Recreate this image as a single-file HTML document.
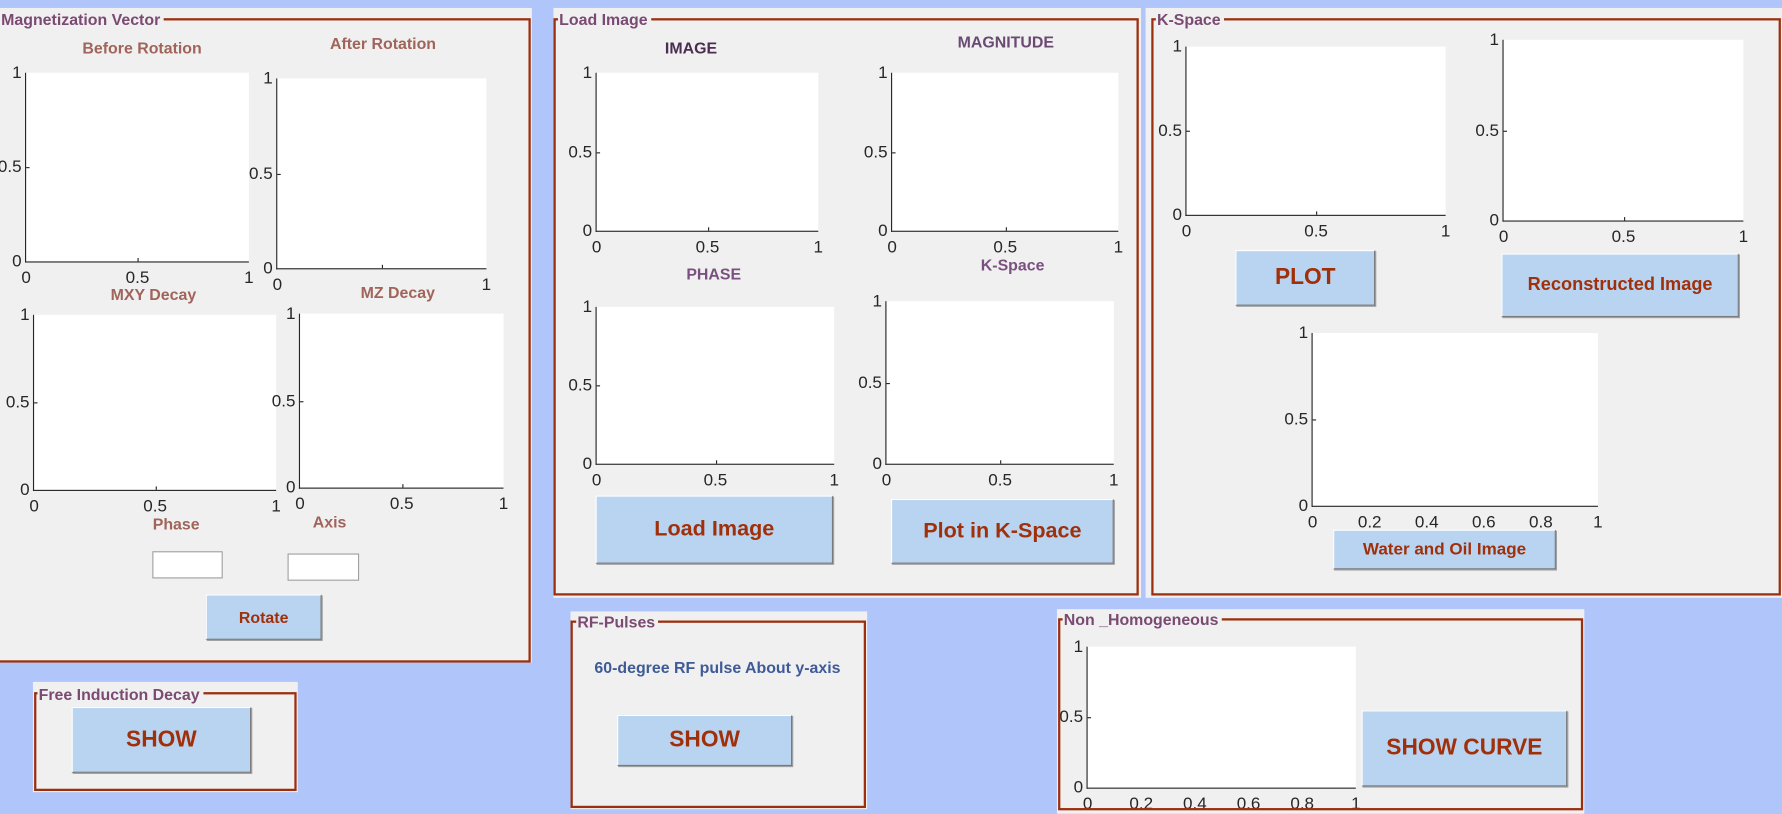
<!DOCTYPE html>
<html><head><meta charset="utf-8"><style>
*{box-sizing:border-box;margin:0;padding:0}
html,body{width:1782px;height:814px;overflow:hidden;background:#b0c6fb}
#w{position:absolute;left:0;top:0;width:1568px;height:716px;transform:scale(1.1365);transform-origin:0 0;font-family:"Liberation Sans",Arial,sans-serif}
.g{position:absolute;background:#f0f0f0;overflow:hidden}
.b{position:absolute;border:2px solid #9c2f0e}
.t{position:absolute;font-weight:bold;font-size:14px;color:#7a4a72;background:#f0f0f0;padding:0 3px 0 1px;line-height:14px;white-space:nowrap}
.ax{position:absolute;background:#fff;border-left:1px solid #262626;border-bottom:1px solid #262626}
.ax span{position:absolute;font-size:15px;color:#262626;line-height:15px;white-space:nowrap}
.ax .y{right:calc(100% + 4px);transform:translateY(-50%)}
.ax .x{top:calc(100% + 7px);transform:translateX(-50%)}
.ax i{position:absolute;background:#262626}
.ht{position:absolute;font-weight:bold;font-size:14px;color:#a0645a;white-space:nowrap;transform:translateX(-50%);background:#f0f0f0;line-height:16px}
.btn{position:absolute;background:#b9d4f1;border:1px solid #fff;border-right-color:#7a7a7a;border-bottom-color:#7a7a7a;box-shadow:1px 1px 0 #a0a0a0;color:#a0300a;font-weight:bold;display:flex;align-items:center;justify-content:center;white-space:nowrap}
.in{position:absolute;background:#fff;border:1px solid #a0a0a0}
</style></head><body><div id="w">

<div class="g" style="left:0;top:7px;width:468px;height:576px"></div>
<div class="b" style="left:-2px;top:16px;width:469px;height:567px"></div>
<div class="t" style="left:0;top:10px">Magnetization Vector</div>

<div class="ax" style="left:22px;top:64px;width:197px;height:167px"><i style="left:0;top:50%;width:3px;height:1px"></i><i style="left:50%;bottom:0;width:1px;height:3px"></i>
<span class="y" style="top:0">1</span><span class="y" style="top:50%">0.5</span><span class="y" style="top:100%">0</span>
<span class="x" style="left:0">0</span><span class="x" style="left:50%">0.5</span><span class="x" style="left:100%">1</span></div>
<div class="ht" style="left:125px;top:34px">Before Rotation</div>

<div class="ax" style="left:243px;top:69px;width:185px;height:168px"><i style="left:0;top:50%;width:3px;height:1px"></i><i style="left:50%;bottom:0;width:1px;height:3px"></i>
<span class="y" style="top:0">1</span><span class="y" style="top:50%">0.5</span><span class="y" style="top:100%">0</span>
<span class="x" style="left:0">0</span><span class="x" style="left:100%">1</span></div>
<div class="ht" style="left:337px;top:30px">After Rotation</div>

<div class="ax" style="left:29px;top:277px;width:214px;height:155px"><i style="left:0;top:50%;width:3px;height:1px"></i><i style="left:50%;bottom:0;width:1px;height:3px"></i>
<span class="y" style="top:0">1</span><span class="y" style="top:50%">0.5</span><span class="y" style="top:100%">0</span>
<span class="x" style="left:0">0</span><span class="x" style="left:50%">0.5</span><span class="x" style="left:100%">1</span></div>
<div class="ht" style="left:135px;top:251px">MXY Decay</div>

<div class="ax" style="left:263px;top:276px;width:180px;height:154px"><i style="left:0;top:50%;width:3px;height:1px"></i><i style="left:50%;bottom:0;width:1px;height:3px"></i>
<span class="y" style="top:0">1</span><span class="y" style="top:50%">0.5</span><span class="y" style="top:100%">0</span>
<span class="x" style="left:0">0</span><span class="x" style="left:50%">0.5</span><span class="x" style="left:100%">1</span></div>
<div class="ht" style="left:350px;top:249px">MZ Decay</div>

<div class="ht" style="left:155px;top:453px">Phase</div>
<div class="ht" style="left:290px;top:451px">Axis</div>
<div class="in" style="left:134px;top:485px;width:62px;height:24px"></div>
<div class="in" style="left:253px;top:487px;width:63px;height:24px"></div>
<div class="btn" style="left:181px;top:523px;width:102px;height:40px;font-size:14px">Rotate</div>

<div class="g" style="left:29px;top:600px;width:233px;height:97px"></div>
<div class="b" style="left:30px;top:609px;width:231px;height:87px"></div>
<div class="t" style="left:33px;top:604px">Free Induction Decay</div>
<div class="btn" style="left:63px;top:622px;width:158px;height:58px;font-size:20px">SHOW</div>

<div class="g" style="left:487px;top:7px;width:517px;height:519px"></div>
<div class="b" style="left:487px;top:16px;width:515px;height:508px"></div>
<div class="t" style="left:491px;top:10px">Load Image</div>

<div class="ax" style="left:524px;top:64px;width:196px;height:140px"><i style="left:0;top:50%;width:3px;height:1px"></i><i style="left:50%;bottom:0;width:1px;height:3px"></i>
<span class="y" style="top:0">1</span><span class="y" style="top:50%">0.5</span><span class="y" style="top:100%">0</span>
<span class="x" style="left:0">0</span><span class="x" style="left:50%">0.5</span><span class="x" style="left:100%">1</span></div>
<div class="ht" style="left:608px;top:34px;color:#4b2d50">IMAGE</div>

<div class="ax" style="left:784px;top:64px;width:200px;height:140px"><i style="left:0;top:50%;width:3px;height:1px"></i><i style="left:50%;bottom:0;width:1px;height:3px"></i>
<span class="y" style="top:0">1</span><span class="y" style="top:50%">0.5</span><span class="y" style="top:100%">0</span>
<span class="x" style="left:0">0</span><span class="x" style="left:50%">0.5</span><span class="x" style="left:100%">1</span></div>
<div class="ht" style="left:885px;top:29px;color:#6a4a72">MAGNITUDE</div>

<div class="ax" style="left:524px;top:270px;width:210px;height:139px"><i style="left:0;top:50%;width:3px;height:1px"></i><i style="left:50%;bottom:0;width:1px;height:3px"></i>
<span class="y" style="top:0">1</span><span class="y" style="top:50%">0.5</span><span class="y" style="top:100%">0</span>
<span class="x" style="left:0">0</span><span class="x" style="left:50%">0.5</span><span class="x" style="left:100%">1</span></div>
<div class="ht" style="left:628px;top:233px;color:#7a5080">PHASE</div>

<div class="ax" style="left:779px;top:265px;width:201px;height:144px"><i style="left:0;top:50%;width:3px;height:1px"></i><i style="left:50%;bottom:0;width:1px;height:3px"></i>
<span class="y" style="top:0">1</span><span class="y" style="top:50%">0.5</span><span class="y" style="top:100%">0</span>
<span class="x" style="left:0">0</span><span class="x" style="left:50%">0.5</span><span class="x" style="left:100%">1</span></div>
<div class="ht" style="left:891px;top:225px;color:#7a5080">K-Space</div>

<div class="btn" style="left:524px;top:436px;width:209px;height:60px;font-size:19px">Load Image</div>
<div class="btn" style="left:784px;top:439px;width:196px;height:57px;font-size:19px">Plot in K-Space</div>

<div class="g" style="left:1008px;top:7px;width:560px;height:519px"></div>
<div class="b" style="left:1013px;top:16px;width:554px;height:508px"></div>
<div class="t" style="left:1017px;top:10px">K-Space</div>

<div class="ax" style="left:1043px;top:41px;width:229px;height:149px"><i style="left:0;top:50%;width:3px;height:1px"></i><i style="left:50%;bottom:0;width:1px;height:3px"></i>
<span class="y" style="top:0">1</span><span class="y" style="top:50%">0.5</span><span class="y" style="top:100%">0</span>
<span class="x" style="left:0">0</span><span class="x" style="left:50%">0.5</span><span class="x" style="left:100%">1</span></div>

<div class="ax" style="left:1322px;top:35px;width:212px;height:160px"><i style="left:0;top:50%;width:3px;height:1px"></i><i style="left:50%;bottom:0;width:1px;height:3px"></i>
<span class="y" style="top:0">1</span><span class="y" style="top:50%">0.5</span><span class="y" style="top:100%">0</span>
<span class="x" style="left:0">0</span><span class="x" style="left:50%">0.5</span><span class="x" style="left:100%">1</span></div>

<div class="btn" style="left:1087px;top:220px;width:123px;height:49px;font-size:20px">PLOT</div>
<div class="btn" style="left:1321px;top:223px;width:209px;height:56px;font-size:16px">Reconstructed Image</div>

<div class="ax" style="left:1154px;top:293px;width:252px;height:153px"><i style="left:0;top:50%;width:3px;height:1px"></i>
<span class="y" style="top:0">1</span><span class="y" style="top:50%">0.5</span><span class="y" style="top:100%">0</span>
<span class="x" style="left:0">0</span><span class="x" style="left:20%">0.2</span><span class="x" style="left:40%">0.4</span><span class="x" style="left:60%">0.6</span><span class="x" style="left:80%">0.8</span><span class="x" style="left:100%">1</span></div>
<div class="btn" style="left:1173px;top:466px;width:196px;height:35px;font-size:15px">Water and Oil Image</div>

<div class="g" style="left:502px;top:538px;width:261px;height:174px"></div>
<div class="b" style="left:502px;top:546px;width:260px;height:165px"></div>
<div class="t" style="left:507px;top:540px">RF-Pulses</div>
<div style="position:absolute;left:523px;top:579px;font-weight:bold;font-size:14px;color:#3f5b97;white-space:nowrap">60-degree RF pulse About y-axis</div>
<div class="btn" style="left:543px;top:629px;width:154px;height:45px;font-size:20px">SHOW</div>

<div class="g" style="left:930px;top:536px;width:464px;height:180px">
<div class="ax" style="left:26px;top:33px;width:237px;height:125px"><i style="left:0;top:50%;width:3px;height:1px"></i>
<span class="y" style="top:0">1</span><span class="y" style="top:50%">0.5</span><span class="y" style="top:100%">0</span>
<span class="x" style="left:0">0</span><span class="x" style="left:20%">0.2</span><span class="x" style="left:40%">0.4</span><span class="x" style="left:60%">0.6</span><span class="x" style="left:80%">0.8</span><span class="x" style="left:100%">1</span></div>
</div>
<div class="b" style="left:931px;top:544px;width:462px;height:169px"></div>
<div class="t" style="left:935px;top:538px">Non _Homogeneous</div>
<div class="btn" style="left:1198px;top:625px;width:181px;height:67px;font-size:20px">SHOW CURVE</div>

</div></body></html>
